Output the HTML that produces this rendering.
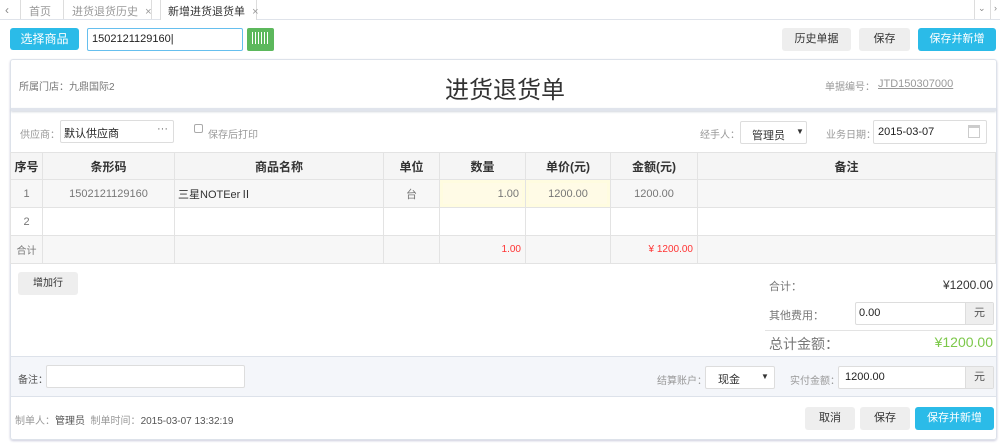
<!DOCTYPE html>
<html><head><meta charset="utf-8"><style>
*{box-sizing:border-box;margin:0;padding:0}
body{width:1000px;height:443px;background:#fff;font-family:"Liberation Sans","Noto Sans CJK SC",sans-serif;font-size:12px;color:#333;position:relative;overflow:hidden}
.a{position:absolute}
.t{position:absolute;white-space:nowrap}
.r{position:absolute;white-space:nowrap;right:7px;text-align:right}
.btn{position:absolute;text-align:center;border-radius:3px;font-size:12px}
.g{background:#eee;color:#333}
.b{background:#2bbbe8;color:#fff}
.box{position:absolute;border:1px solid #ddd;background:#fff;border-radius:2px}
table{position:absolute;left:10px;top:152px;border-collapse:collapse;width:986px}
td,th{border:1px solid #e3e3e3;text-align:center;font-size:11px;color:#777;height:28px}
th{background:#f5f5f5;color:#333;font-weight:bold;height:27px;font-size:12px}
</style></head><body>
<div class="a" style="left:0;top:19px;width:1000px;height:1px;background:#dfe3ea"></div>
<div class="a" style="left:20px;top:0;width:1px;height:19px;background:#ddd"></div>
<div class="t" style="left:5px;top:3px;color:#888">‹</div>
<div class="a" style="left:63px;top:0;width:1px;height:19px;background:#ddd"></div>
<div class="t" style="left:29px;top:3px;color:#999;font-size:11px">首页</div>
<div class="t" style="left:72px;top:3px;color:#999;font-size:11px">进货退货历史 <span style="margin-left:4px">×</span></div>
<div class="a" style="left:151px;top:0;width:1px;height:19px;background:#ddd"></div>
<div class="a" style="left:160px;top:0;width:97px;height:20px;background:#fff;border-left:1px solid #ddd;border-right:1px solid #ddd"></div>
<div class="t" style="left:168px;top:3px;color:#333;font-size:11px">新增进货退货单 <span style="margin-left:4px;color:#999">×</span></div>
<div class="a" style="left:974px;top:0;width:1px;height:19px;background:#ddd"></div>
<div class="a" style="left:990px;top:0;width:1px;height:19px;background:#ddd"></div>
<div class="t" style="left:978px;top:3px;color:#888;font-size:9px">⌄</div>
<div class="t" style="left:994px;top:3px;color:#888;font-size:9px">›</div>
<div class="btn b" style="left:10px;top:28px;width:69px;height:22px;line-height:22px">选择商品</div>
<div class="a" style="left:87px;top:28px;width:156px;height:23px;border:1px solid #66bfee;border-radius:2px;background:#fff"></div>
<div class="t" style="left:92px;top:33px;font-size:11px;color:#222">1502121129160|</div>
<div class="a" style="left:247px;top:28px;width:27px;height:23px;background:#5cb85c;border-radius:2px"></div>
<div class="a" style="left:252px;top:32px;width:17px;height:12px;background:repeating-linear-gradient(90deg,#fff 0 1px,transparent 1px 3px)"></div>
<div class="btn g" style="left:782px;top:28px;width:69px;height:23px;line-height:23px;font-size:11px">历史单据</div>
<div class="btn g" style="left:859px;top:28px;width:51px;height:23px;line-height:23px;font-size:11px">保存</div>
<div class="btn b" style="left:918px;top:28px;width:78px;height:23px;line-height:23px;font-size:11px">保存并新增</div>
<div class="a" style="left:10px;top:59px;width:987px;height:381px;border:1px solid #dde2ea;border-radius:3px;box-shadow:0 1px 2px #ccd"></div>
<div class="a" style="left:11px;top:108px;width:985px;height:3px;background:#e0e4ec;box-shadow:0 1px 2px #d0d5de"></div>
<div class="t" style="left:19px;top:78px;color:#777;font-size:10px">所属门店：九鼎国际2</div>
<div class="t" style="left:445px;top:70px;font-size:24px;color:#333">进货退货单</div>
<div class="t" style="left:825px;top:78px;color:#999;font-size:10px">单据编号：</div>
<div class="t" style="left:878px;top:78px;color:#999;font-size:11px;text-decoration:underline">JTD150307000</div>
<div class="t" style="left:20px;top:126px;color:#999;font-size:10px">供应商：</div>
<div class="box" style="left:60px;top:120px;width:114px;height:23px"></div>
<div class="t" style="left:64px;top:125px;color:#222;font-size:11px">默认供应商</div>
<div class="t" style="left:157px;top:123px;color:#666;font-size:11px">···</div>
<div class="a" style="left:194px;top:124px;width:9px;height:9px;border:1px solid #aaa;border-radius:2px"></div>
<div class="t" style="left:208px;top:126px;color:#999;font-size:10px">保存后打印</div>
<div class="t" style="left:700px;top:126px;color:#999;font-size:10px">经手人：</div>
<div class="box" style="left:740px;top:121px;width:67px;height:23px"></div>
<div class="t" style="left:752px;top:127px;color:#333;font-size:11px">管理员</div>
<div class="t" style="left:796px;top:127px;font-size:8px">▼</div>
<div class="t" style="left:826px;top:126px;color:#999;font-size:10px">业务日期：</div>
<div class="box" style="left:873px;top:120px;width:114px;height:24px"></div>
<div class="t" style="left:878px;top:126px;color:#222;font-size:11px">2015-03-07</div>
<div class="a" style="left:968px;top:125px;width:12px;height:13px;border:1px solid #ccc;border-top:3px solid #ccc"></div>
<table>
<tr><th style="width:32px">序号</th><th style="width:132px">条形码</th><th style="width:209px">商品名称</th><th style="width:56px">单位</th><th style="width:86px">数量</th><th style="width:85px">单价(元)</th><th style="width:87px">金额(元)</th><th>备注</th></tr>
<tr style="background:#f7f7f7"><td>1</td><td>1502121129160</td><td style="text-align:left;color:#333;padding-left:3px">三星NOTEerⅡ</td><td>台</td><td style="background:#fffbe6;text-align:right;padding-right:6px;box-shadow:inset 0 0 0 3px #fffce0">1.00</td><td style="background:#fffbe6;box-shadow:inset 0 0 0 3px #fffce0">1200.00</td><td>1200.00</td><td></td></tr>
<tr><td>2</td><td></td><td></td><td></td><td></td><td></td><td></td><td></td></tr>
<tr style="background:#f7f7f7"><td style="font-size:10px">合计</td><td></td><td></td><td></td><td style="color:#f33;text-align:right;padding-right:4px;font-size:10px">1.00</td><td></td><td style="color:#f33;text-align:right;padding-right:4px;font-size:10px">¥ 1200.00</td><td></td></tr>
</table>
<div class="btn g" style="left:18px;top:272px;width:60px;height:23px;line-height:23px;font-size:10px">增加行</div>
<div class="t" style="left:769px;top:278px;color:#777;font-size:11px">合计：</div>
<div class="r" style="top:278px;color:#333;font-size:12px">¥1200.00</div>
<div class="t" style="left:769px;top:307px;color:#777;font-size:11px">其他费用：</div>
<div class="box" style="left:855px;top:302px;width:139px;height:23px"></div>
<div class="t" style="left:859px;top:307px;color:#222;font-size:11px">0.00</div>
<div class="a" style="left:965px;top:303px;width:28px;height:21px;background:#eee;border-left:1px solid #ddd;text-align:center;line-height:21px;color:#555;font-size:11px">元</div>
<div class="a" style="left:765px;top:330px;width:231px;height:1px;background:#e3e3e3"></div>
<div class="t" style="left:769px;top:334px;color:#777;font-size:14px">总计金额：</div>
<div class="r" style="top:334px;color:#7cc84a;font-size:14px">¥1200.00</div>
<div class="a" style="left:11px;top:356px;width:985px;height:41px;background:#f4f6fa;border-top:1px solid #dde2ea;border-bottom:1px solid #dde2ea"></div>
<div class="t" style="left:18px;top:371px;color:#555;font-size:10px">备注：</div>
<div class="box" style="left:46px;top:365px;width:199px;height:23px"></div>
<div class="t" style="left:657px;top:372px;color:#999;font-size:10px">结算账户：</div>
<div class="box" style="left:705px;top:366px;width:70px;height:23px"></div>
<div class="t" style="left:718px;top:371px;color:#333;font-size:11px">现金</div>
<div class="t" style="left:761px;top:372px;font-size:8px">▼</div>
<div class="t" style="left:790px;top:372px;color:#999;font-size:10px">实付金额：</div>
<div class="box" style="left:838px;top:366px;width:156px;height:23px"></div>
<div class="t" style="left:845px;top:371px;color:#222;font-size:11px">1200.00</div>
<div class="a" style="left:965px;top:367px;width:28px;height:21px;background:#eee;border-left:1px solid #ddd;text-align:center;line-height:21px;color:#555;font-size:11px">元</div>
<div class="t" style="left:15px;top:412px;color:#999;font-size:10px">制单人：<span style="color:#555">管理员</span>&nbsp; 制单时间：<span style="color:#555">2015-03-07 13:32:19</span></div>
<div class="btn g" style="left:805px;top:407px;width:50px;height:23px;line-height:23px;font-size:11px">取消</div>
<div class="btn g" style="left:860px;top:407px;width:50px;height:23px;line-height:23px;font-size:11px">保存</div>
<div class="btn b" style="left:915px;top:407px;width:79px;height:23px;line-height:23px;font-size:11px">保存并新增</div>
</body></html>
